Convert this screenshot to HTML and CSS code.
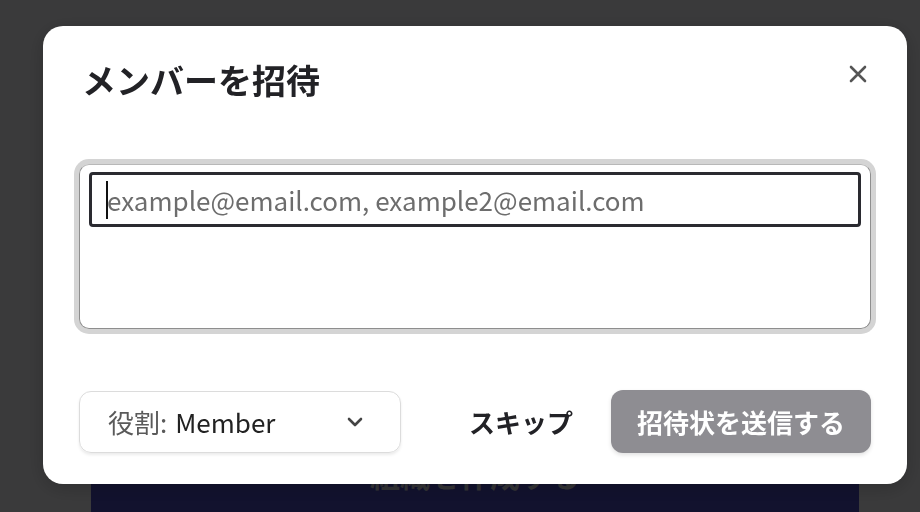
FILE: index.html
```html
<!DOCTYPE html>
<html lang="ja">
<head>
    <meta charset="UTF-8">
    <meta name="viewport" content="width=device-width, initial-scale=1.0">
    <title>メンバーを招待</title>
    <link rel="stylesheet" href="styles.css">
</head>
<body>
    <div class="page">
        <div class="page-actions">
            <button class="primary-btn">組織を作成する</button>
        </div>
    </div>

    <div class="overlay">
        <div class="modal">
            <div class="modal-header">
                <h2>メンバーを招待</h2>
                <button class="close-btn" aria-label="閉じる">
                    <svg width="18" height="18" viewBox="0 0 18 18">
                        <path d="M2 2 L16 16 M16 2 L2 16" stroke="#555" stroke-width="2.6" stroke-linecap="round"/>
                    </svg>
                </button>
            </div>

            <div class="email-box">
                <div class="email-input">
                    <span class="caret"></span>
                    <span class="placeholder">example@email.com, example2@email.com</span>
                </div>
            </div>

            <div class="modal-footer">
                <div class="role-select">
                    <span class="role-label">役割:</span>
                    <span class="role-value">Member</span>
                    <svg class="chevron" width="16" height="10" viewBox="0 0 16 10">
                        <path d="M2 2 L8 8 L14 2" fill="none" stroke="#444" stroke-width="2.6" stroke-linecap="round" stroke-linejoin="round"/>
                    </svg>
                </div>
                <div class="footer-actions">
                    <button class="skip-btn">スキップ</button>
                    <button class="send-btn">招待状を送信する</button>
                </div>
            </div>
        </div>
    </div>
</body>
</html>
```

FILE: styles.css
```css
* {
    margin: 0;
    padding: 0;
    box-sizing: border-box;
}

body {
    font-family: "Noto Sans CJK JP", "Noto Sans", sans-serif;
    background: #fbfbfd;
    overflow: hidden;
}

button {
    font-family: inherit;
    border: none;
    background: none;
    cursor: pointer;
}

.page {
    height: 512px;
    padding: 436px 61px 0 91px;
}

.page-actions {
    width: 768px;
}

.primary-btn {
    width: 100%;
    height: 80px;
    background: #4e4ec6;
    color: #dcdce6;
    font-size: 30px;
    font-weight: bold;
    line-height: 1;
    padding-bottom: 4px;
    border-radius: 6px 6px 0 0;
}

.overlay {
    position: fixed;
    inset: 0;
    background: rgba(0, 0, 0, 0.77);
}

.modal {
    position: absolute;
    left: 43px;
    top: 26px;
    width: 864px;
    height: 458px;
    background: white;
    border-radius: 20px;
    padding: 34px 36px 0 36px;
    box-shadow: 0 4px 20px rgba(0,0,0,0.2);
}

.modal-header {
    display: flex;
    justify-content: space-between;
    align-items: center;
    height: 40px;
}

.modal-header h2 {
    font-size: 34px;
    font-weight: bold;
    color: #222226;
    margin-left: 3px;
    line-height: 40px;
}

.close-btn {
    display: flex;
    margin-right: 4px;
    margin-top: -12px;
}

.email-box {
    margin-top: 64px;
    height: 165px;
    border: 1.5px solid #8e8e8e;
    border-top-color: #b8b8b8;
    border-radius: 10px;
    box-shadow: 0 0 0 5px #d4d4d4;
    padding: 7px 9px;
}

.email-input {
    height: 55px;
    border: 3px solid #2a2a30;
    border-radius: 4px;
    display: flex;
    align-items: center;
    padding-left: 14px;
}

.caret {
    width: 2px;
    height: 38px;
    background: #111;
    margin-right: -1px;
}

.placeholder {
    font-size: 26px;
    color: #6d6d6d;
    white-space: nowrap;
}

.modal-footer {
    display: flex;
    justify-content: space-between;
    align-items: center;
    margin-top: 61px;
}

.role-select {
    width: 322px;
    height: 62px;
    display: flex;
    align-items: center;
    padding: 0 37px 0 28px;
    border: 1px solid #dcdcdc;
    border-radius: 12px;
    box-shadow: 0 2px 3px rgba(0,0,0,0.08);
    font-size: 26px;
}

.role-label {
    color: #5a5a5a;
    margin-right: 8px;
}

.role-value {
    color: #222;
}

.chevron {
    margin-left: auto;
}

.footer-actions {
    display: flex;
    align-items: center;
    gap: 38px;
}

.skip-btn {
    font-size: 26px;
    font-weight: bold;
    color: #222226;
}

.send-btn {
    width: 260px;
    height: 63px;
    background: #8e8d92;
    color: white;
    font-size: 26px;
    font-weight: bold;
    border-radius: 12px;
    box-shadow: 0 2px 4px rgba(0,0,0,0.12);
}
```
